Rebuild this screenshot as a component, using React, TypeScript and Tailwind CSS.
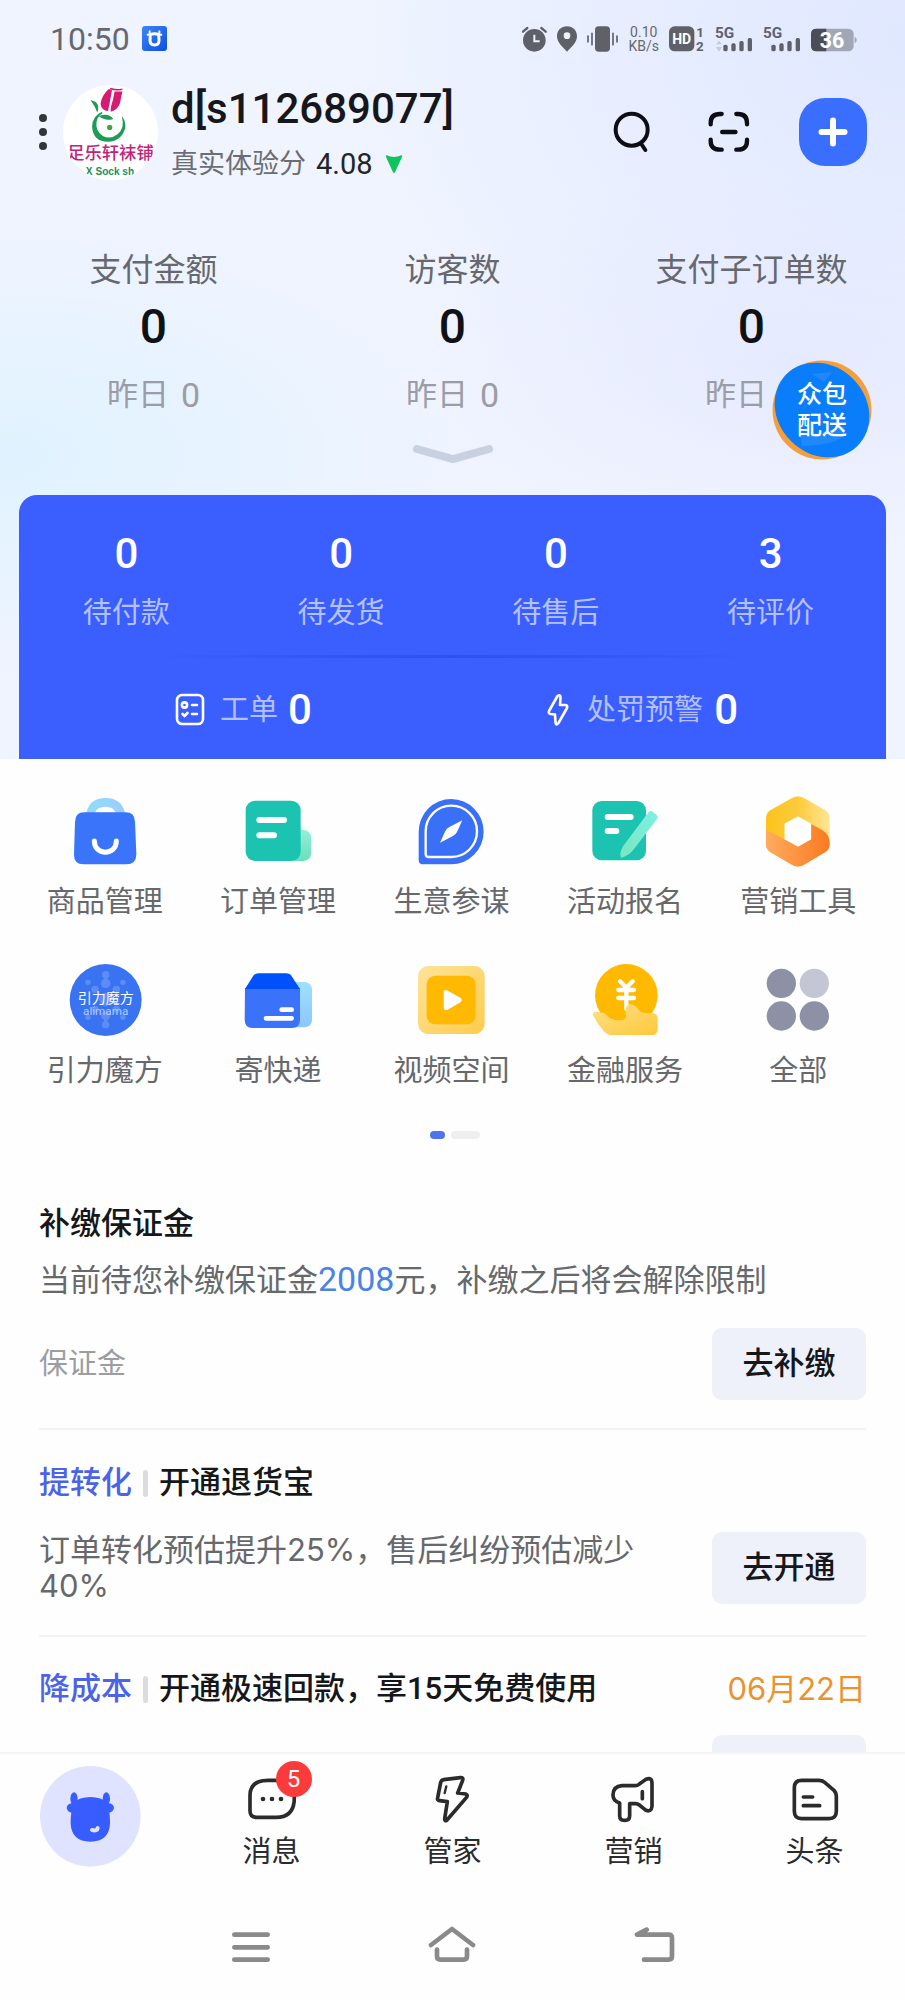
import type { ReactNode } from "react";

/* ---------- status bar ---------- */

function SignalBars() {
  return (
    <g fill="#5f6168">
      <text x="0" y="35" fontSize="46">5G</text>
      <rect x="25" y="56" width="13" height="20" rx="5" />
      <rect x="49" y="52" width="13" height="24" rx="5" />
      <rect x="73" y="45" width="13" height="31" rx="5" />
      <rect x="98" y="36" width="13" height="40" rx="5" />
    </g>
  );
}

function StatusBar() {
  return (
    <div className="flex h-[77px] items-center justify-between pr-[48px] pl-[50px] text-[#66686e]">
      <div className="flex items-center gap-[12px]">
        <span className="text-[32px] leading-[40px]">10:50</span>
        <svg width="25" height="25" viewBox="0 0 75 75" aria-hidden="true">
          <defs>
            <linearGradient id="app" x1="0" y1="0" x2="1" y2="1">
              <stop offset="0" stopColor="#3f86f5" />
              <stop offset="1" stopColor="#0a4fe6" />
            </linearGradient>
          </defs>
          <rect width="75" height="75" rx="9" fill="url(#app)" />
          <path d="M23 16v10M52 16v10M17 26h7M51 26h7" stroke="#fff" strokeWidth="6" strokeLinecap="round" />
          <path d="M25 26 Q38 20 50 26 L51 43 Q51 57 38 57 Q24 57 24 43 Z" fill="none" stroke="#fff" strokeWidth="9" />
        </svg>
      </div>
      <div className="flex items-center gap-[10px]">
        <svg width="25" height="26" viewBox="0 0 75 78" aria-hidden="true">
          <circle cx="37" cy="43" r="34" fill="#5f6168" />
          <path d="M3 17 L16 6 M71 17 L58 6" stroke="#5f6168" strokeWidth="7" strokeLinecap="round" />
          <path d="M37 26 V46 H53" fill="none" stroke="#eef2ff" strokeWidth="6" />
        </svg>
        <svg width="20" height="26" viewBox="0 0 60 78" aria-hidden="true">
          <path d="M30 1 C12 1 0 14 0 31 C0 50 18 64 30 77 C42 64 60 50 60 31 C60 14 48 1 30 1 Z" fill="#5f6168" />
          <circle cx="30" cy="29" r="10" fill="#eef2ff" />
        </svg>
        <svg width="31" height="26" viewBox="0 0 93 78" aria-hidden="true">
          <rect x="24" y="1" width="45" height="76" rx="11" fill="#5f6168" />
          <path d="M3 30v18M15 22v34M78 22v34M90 30v18" stroke="#5f6168" strokeWidth="5" strokeLinecap="round" />
        </svg>
        <div className="flex flex-col items-center text-[14px] leading-[14px]">
          <span>0.10</span>
          <span>KB/s</span>
        </div>
        <svg width="36" height="26" viewBox="0 0 108 78" className="overflow-visible font-bold" aria-label="HD 1 2">
          <rect x="0" y="1" width="76" height="75" rx="17" fill="#5f6168" />
          <text x="38" y="54" fontSize="42" textAnchor="middle" fill="#fff">HD</text>
          <text x="82" y="34" fontSize="40" fill="#5f6168">1</text>
          <text x="81" y="75" fontSize="40" fill="#5f6168">2</text>
        </svg>
        <svg width="38" height="26" viewBox="0 0 114 78" className="overflow-visible font-bold" aria-label="5G">
          <path d="M12 44 L21 55 H3 Z M12 77 L21 63 H3 Z" fill="#c3cadb" />
          <SignalBars />
        </svg>
        <svg width="38" height="26" viewBox="0 0 114 78" className="overflow-visible font-bold" aria-label="5G">
          <SignalBars />
        </svg>
        <svg width="46" height="26" viewBox="0 0 138 78" className="overflow-visible font-bold" aria-label="36">
          <rect x="0" y="8" width="128" height="68" rx="16" fill="#a2a7b6" />
          <path d="M16 8 H46 V76 H16 Q0 76 0 60 V24 Q0 8 16 8 Z" fill="#4c4e55" />
          <path d="M131 32 Q137 34 137 42 Q137 50 131 52 Z" fill="#a2a7b6" />
          <text x="63" y="65" fontSize="64" textAnchor="middle" fill="#fff">36</text>
        </svg>
      </div>
    </div>
  );
}

/* ---------- shop header ---------- */

function ShopLogo() {
  return (
    <svg width="95" height="95" viewBox="0 0 291 291" className="rounded-full bg-white" role="img" aria-label="足乐轩袜铺">
      <path d="M140 12 Q118 32 115 58 Q118 78 138 80 Q144 50 150 16 Z" fill="#d81b72" />
      <path d="M158 20 L182 20 Q178 36 175 54 Q168 76 146 82 Q145 68 153 46 Z" fill="#d81b72" />
      <path d="M144 11 Q160 17 182 13" stroke="#d81b72" strokeWidth="5" fill="none" />
      <path d="M84 46 Q106 50 108 66 Q109 76 105 84 Q98 64 84 46 Z" fill="#1e9b57" />
      <path d="M120 82 Q90 94 89 128 Q92 174 138 174 Q180 172 191 130 Q192 108 180 96 Q190 132 168 150 Q146 168 122 156 Q98 140 103 112 Q107 94 120 88 Z" fill="#1e9b57" />
      <path d="M110 96 Q138 84 154 104 Q130 112 110 96 Z" fill="#1e9b57" />
      <circle cx="143" cy="130" r="8" fill="#3fa535" />
      <text x="13" y="228" fontSize="53" fontWeight="500" fill="#c2237a">足乐轩袜铺</text>
      <text x="70" y="277" fontSize="31" fontWeight="700" fill="#1e8f5c" className="font-['Liberation_Sans']">X Sock sh</text>
    </svg>
  );
}

function ShopHeader() {
  return (
    <div className="flex h-[110px] items-center justify-between pr-[38px] pl-[38px]">
      <div className="flex items-center">
        <button type="button" aria-label="更多" className="mr-[15px]">
          <svg width="10" height="38" viewBox="0 0 10 38">
            <circle cx="5" cy="5" r="4" fill="#33353c" />
            <circle cx="5" cy="19" r="4" fill="#33353c" />
            <circle cx="5" cy="33" r="4" fill="#33353c" />
          </svg>
        </button>
        <ShopLogo />
        <div className="ml-[13px]">
          <h1 className="text-[42px] leading-[56px] font-medium text-[#15171c]">d[s112689077]</h1>
          <p className="mt-2 flex items-center text-[27px] leading-[38px] text-[#6b6d73]">
            真实体验分
            <span className="ml-[10px] text-[29px] text-[#23252b]">4.08</span>
            <svg width="18" height="20" viewBox="0 0 54 60" className="ml-[12px]" aria-hidden="true">
              <path d="M5 4 Q27 14 49 4 Q53 3 51 9 L30 55 Q27 60 24 55 L3 9 Q1 3 5 4 Z" fill="#10c45c" />
            </svg>
          </p>
        </div>
      </div>
      <div className="flex items-center">
        <button type="button" aria-label="搜索" className="mr-[57px]">
          <svg width="38" height="42" viewBox="0 0 114 126" fill="none" stroke="#0c0e12" strokeWidth="12" strokeLinecap="round">
            <circle cx="56" cy="56" r="48" />
            <path d="M85 99 L97 117" />
          </svg>
        </button>
        <button type="button" aria-label="扫一扫" className="mr-[49px]">
          <svg width="42" height="42" viewBox="0 0 126 126" fill="none" stroke="#0c0e12" strokeWidth="13" strokeLinecap="round">
            <path d="M8 40 V36 Q8 9 36 9 H41 M85 9 H90 Q117 9 117 36 V40 M117 86 V90 Q117 116 90 116 H85 M41 116 H36 Q8 116 8 90 V86" />
            <path d="M43 63 H82" strokeWidth="14" />
          </svg>
        </button>
        <button type="button" aria-label="新建" className="flex size-[68px] items-center justify-center rounded-[26px] bg-[#3a6eff]">
          <svg width="30" height="30" viewBox="0 0 30 30" stroke="#fff" strokeWidth="6" strokeLinecap="round">
            <path d="M15 3.500V26.500M3.500 15H26.500" />
          </svg>
        </button>
      </div>
    </div>
  );
}

/* ---------- statistics ---------- */

const stats = ["支付金额", "访客数", "支付子订单数"];

function Stats() {
  return (
    <section className="relative px-1 pt-[63px]">
      <div className="grid grid-cols-3 text-center">
        {stats.map((label) => (
          <div key={label}>
            <p className="text-[32px] leading-[40px] text-[#66686e]">{label}</p>
            <p className="mt-[9px] text-[48px] leading-[56px] font-medium text-[#0f1115]">0</p>
            <p className="mt-[20px] flex items-center justify-center gap-3 text-[31px] leading-[40px] text-[#9a9da5]">
              昨日<span className="text-[34px]">0</span>
            </p>
          </div>
        ))}
      </div>
      <button type="button" aria-label="展开" className="mx-auto mt-[29px] block">
        <svg width="82" height="22" viewBox="0 0 82 22" fill="none" stroke="#c9d1e0" strokeWidth="8" strokeLinecap="round">
          <path d="M5 5 L41 15 L77 5" />
        </svg>
      </button>
      <a href="#delivery" className="absolute right-[33px] bottom-[6px] flex size-[100px] items-center justify-center">
        <svg width="100" height="100" viewBox="0 0 100 100" className="absolute inset-0" aria-hidden="true">
          <circle cx="50" cy="50" r="49.500" fill="#f3a03c" />
          <ellipse cx="50" cy="50" rx="50.500" ry="44" transform="rotate(45 50 50)" fill="#0a7dfb" />
          <path d="M28 74 Q50 76 72 66 Q80 84 30 86 Z" fill="#2f8ffb" opacity=".6" />
          <path d="M40 14 L60 12 L52 22 Z" fill="#2f8ffb" opacity=".6" />
        </svg>
        <span className="relative w-[50px] text-[25px] leading-[31px] font-medium text-white">众包配送</span>
      </a>
    </section>
  );
}

/* ---------- to-do card ---------- */

const todos = [
  { label: "待付款", count: 0 },
  { label: "待发货", count: 0 },
  { label: "待售后", count: 0 },
  { label: "待评价", count: 3 },
];

function TodoCard() {
  return (
    <section className="mx-[19px] mt-[29px] rounded-t-[18px] bg-[#3b5eff] pt-[31px] pb-[25px] text-white">
      <div className="grid grid-cols-4 pr-[8px] text-center">
        {todos.map((t) => (
          <div key={t.label}>
            <p className="text-[42px] leading-[56px] font-medium">{t.count}</p>
            <p className="mt-[11px] text-[29px] leading-[40px] text-[#b3c1ff]">{t.label}</p>
          </div>
        ))}
      </div>
      <div className="mx-[130px] mt-[22px] h-[3px] bg-linear-to-r from-[#3b5eff] via-[#2f4fee] to-[#3b5eff]" />
      <div className="mt-[28px] flex items-center justify-between pr-[148px] pl-[156px] leading-[48px]">
        <div className="flex items-center">
          <svg width="30" height="34" viewBox="0 0 30 34" fill="none" stroke="#fff" strokeWidth="2.600" strokeLinecap="round" aria-hidden="true">
            <rect x="2" y="2" width="26" height="29" rx="5" />
            <circle cx="9.500" cy="12" r="2.600" />
            <path d="M17 12h5M17 21h5M7.500 21l2 2L12.500 20" />
          </svg>
          <span className="ml-[15px] text-[29px] text-[#b3c1ff]">工单</span>
          <span className="ml-[10px] text-[42px] font-medium">0</span>
        </div>
        <div className="flex items-center">
          <svg width="22" height="34" viewBox="0 0 22 34" fill="none" stroke="#fff" strokeWidth="2.600" strokeLinejoin="round" aria-hidden="true">
            <path d="M10.500 3 Q13.500 1 13.500 4.500 L13 12 H18 Q21 12 20 15 L11.500 30 Q9 33 8.500 29.500 L8 21.500 L3.500 21 Q1 20.500 2 18 Z" />
          </svg>
          <span className="ml-[18px] text-[29px] text-[#b3c1ff]">处罚预警</span>
          <span className="ml-[11px] text-[42px] font-medium">0</span>
        </div>
      </div>
    </section>
  );
}

/* ---------- shortcuts ---------- */

const shortcuts: { label: string; art: ReactNode }[] = [
  {
    label: "商品管理",
    art: (
      <>
        <defs>
          <linearGradient id="bag" x1="0" y1="0" x2="1" y2="0">
            <stop offset="0" stopColor="#8fdcf8" />
            <stop offset="1" stopColor="#9ccdff" />
          </linearGradient>
        </defs>
        <path d="M57 72 Q60 15 116 15 Q170 15 176 72 Z" fill="url(#bag)" />
        <path d="M84 60 Q90 41 116 41 Q140 41 146 60 Z" fill="#fff" />
        <path d="M52 58 H176 Q203 58 204 86 L208 184 Q208 214 178 214 H50 Q20 214 21 184 L24 86 Q25 58 52 58 Z" fill="#3a74fb" />
        <path d="M82 144 C82 189 148 189 148 144" fill="none" stroke="#fff" strokeWidth="15" strokeLinecap="round" />
      </>
    ),
  },
  {
    label: "订单管理",
    art: (
      <>
        <defs>
          <linearGradient id="order" x1="0" y1="0" x2="0" y2="1">
            <stop offset="0" stopColor="#93eedd" />
            <stop offset="1" stopColor="#68e0b8" />
          </linearGradient>
        </defs>
        <rect x="140" y="111" width="73" height="93" rx="22" fill="url(#order)" />
        <rect x="17" y="23" width="165" height="181" rx="28" fill="#1bc3b0" />
        <path d="M58 81 H132 M58 127 H102" stroke="#fff" strokeWidth="18" strokeLinecap="round" />
      </>
    ),
  },
  {
    label: "生意参谋",
    art: (
      <>
        <path d="M17 116 A97.500 98 0 1 1 114 214 H31 Q17 214 17 200 Z" fill="#3a70f8" />
        <path d="M38 115 A77 77 0 1 1 115 192 H48 Q38 192 38 182 Z" fill="none" stroke="#fff" strokeWidth="7" />
        <path d="M81 149 L97 114 Q101 107 109 102 L148 82 L132 117 Q128 125 120 129 Z" fill="#fff" />
      </>
    ),
  },
  {
    label: "活动报名",
    art: (
      <>
        <defs>
          <linearGradient id="pen" x1="1" y1="0" x2="0" y2="1">
            <stop offset="0" stopColor="#7ff0e6" />
            <stop offset="1" stopColor="#78e6bf" />
          </linearGradient>
        </defs>
        <rect x="16" y="24" width="161" height="178" rx="28" fill="#1cc3b0" />
        <path d="M62 72 H131 M62 114 H88" stroke="#fff" strokeWidth="18" strokeLinecap="round" />
        <path d="M185 57 Q191 51 198 57 L209 66 Q215 71 211 77 L138 172 Q126 187 102 195 Q96 181 108 160 Z" fill="url(#pen)" />
      </>
    ),
  },
  {
    label: "营销工具",
    art: (
      <>
        <defs>
          <linearGradient id="hexTop" x1="0" y1="0.500" x2="1" y2="0.500">
            <stop offset="0" stopColor="#fcc41a" />
            <stop offset="0.500" stopColor="#fccb3c" />
            <stop offset="1" stopColor="#ffe596" />
          </linearGradient>
          <linearGradient id="hexLow" x1="0" y1="0" x2="1" y2="0">
            <stop offset="0" stopColor="#ffab5e" />
            <stop offset="1" stopColor="#f97a20" />
          </linearGradient>
        </defs>
        <path d="M92 17 Q114 2 136 17 L195 51 Q209 59 209 77 V154 Q209 170 195 178 L136 213 Q114 228 92 213 L32 178 Q18 170 18 154 V77 Q18 59 32 51 Z" fill="url(#hexTop)" />
        <path d="M18 111 L114 160 L153 138 V93 L188 112 Q209 126 209 150 V154 Q209 170 195 178 L136 213 Q114 228 92 213 L32 178 Q18 170 18 154 Z" fill="url(#hexLow)" />
        <path d="M114 73 L151 94 V137 L114 158 L76 137 V94 Z" fill="#fff" stroke="#fff" strokeWidth="5" strokeLinejoin="round" />
      </>
    ),
  },
  {
    label: "引力魔方",
    art: (
      <>
        <circle cx="116" cy="114" r="108" fill="#3a73f2" />
        <g fill="#7fa6fb" opacity=".5">
          <circle cx="116" cy="38" r="11" />
          <circle cx="116" cy="64" r="14" />
          <circle cx="63" cy="61" r="8" />
          <circle cx="168" cy="61" r="8" />
          <circle cx="84" cy="82" r="11" />
          <circle cx="148" cy="82" r="11" />
          <circle cx="116" cy="112" r="20" />
          <circle cx="84" cy="142" r="11" />
          <circle cx="148" cy="142" r="11" />
          <circle cx="116" cy="160" r="14" />
          <circle cx="63" cy="166" r="8" />
          <circle cx="168" cy="166" r="8" />
          <circle cx="116" cy="188" r="11" />
          <path d="M111 38h10v26h-10zM111 160h10v28h-10z" />
        </g>
        <text x="116" y="122" fontSize="42" textAnchor="middle" fill="#fff">引力魔方</text>
        <text x="116" y="159" fontSize="35" textAnchor="middle" fill="#b5cbff">alimama</text>
      </>
    ),
  },
  {
    label: "寄快递",
    art: (
      <>
        <defs>
          <linearGradient id="box" x1="0" y1="0" x2="0" y2="1">
            <stop offset="0" stopColor="#a0e0fb" />
            <stop offset="1" stopColor="#8cc6ff" />
          </linearGradient>
        </defs>
        <rect x="130" y="60" width="86" height="136" rx="22" fill="url(#box)" />
        <path d="M15 78 H180 V173 Q180 198 156 198 H38 Q14 198 14 173 Z" fill="#3a73fa" />
        <path d="M15 81 L38 44 Q43 34 56 34 H138 Q150 34 156 44 L180 81 Z" fill="#0050fb" />
        <path d="M125 143 H155 M78 169 H155" stroke="#fff" strokeWidth="14" strokeLinecap="round" />
      </>
    ),
  },
  {
    label: "视频空间",
    art: (
      <>
        <defs>
          <linearGradient id="video" x1="0" y1="0" x2="1" y2="1">
            <stop offset="0" stopColor="#fde49a" />
            <stop offset="1" stopColor="#ffcb4d" />
          </linearGradient>
        </defs>
        <rect x="15" y="12" width="200" height="204" rx="32" fill="url(#video)" />
        <rect x="41" y="41" width="147" height="146" rx="26" fill="#ffb900" />
        <path d="M92 94 Q92 80 104 86 L142 107 Q150 114 142 121 L104 143 Q92 148 92 135 Z" fill="#fff" />
      </>
    ),
  },
  {
    label: "金融服务",
    art: (
      <>
        <defs>
          <linearGradient id="hand" x1="0" y1="0" x2="1" y2="1">
            <stop offset="0" stopColor="#fde08a" />
            <stop offset="1" stopColor="#ffc838" />
          </linearGradient>
        </defs>
        <circle cx="118" cy="100" r="94" fill="#ffb900" />
        <path d="M99 58 L118 77 L137 58 M94 84 H141 M94 108 H141 M118 78 V140" fill="none" stroke="#fff" strokeWidth="13" strokeLinecap="round" />
        <path d="M17 158 Q18 147 33 150 L53 154 Q72 176 95 175 L108 174 Q117 172 116 160 L116 138 Q124 120 140 130 Q150 134 158 147 Q165 154 185 153 Q212 151 212 168 L212 201 Q211 219 195 219 L77 219 Q62 219 52 209 L35 188 Z" fill="url(#hand)" />
      </>
    ),
  },
  {
    label: "全部",
    art: (
      <>
        <circle cx="64" cy="64" r="44" fill="#8e90a5" />
        <circle cx="163" cy="64" r="44" fill="#c4c6d5" />
        <circle cx="64" cy="162" r="44" fill="#8e90a5" />
        <circle cx="163" cy="162" r="44" fill="#8e90a5" />
      </>
    ),
  },
];

function Shortcuts() {
  return (
    <section className="pt-[34px]">
      <div className="grid grid-cols-5 gap-y-[40px] pr-[20px] pl-[18px]">
        {shortcuts.map((s) => (
          <a key={s.label} href="#shortcut" className="flex flex-col items-center">
            <svg width="76" height="76" viewBox="0 0 228 228" aria-hidden="true">
              {s.art}
            </svg>
            <span className="mt-[13px] text-[29px] leading-[40px] text-[#66686c]">{s.label}</span>
          </a>
        ))}
      </div>
      <div className="mt-[40px] flex justify-center gap-[6px] pl-[5px]">
        <span className="h-2 w-[15px] rounded-full bg-[#4f73ee]" />
        <span className="h-2 w-[29px] rounded-full bg-[#efeff1]" />
      </div>
    </section>
  );
}

/* ---------- notices ---------- */

function ActionButton({ label, children }: { label?: string; children?: ReactNode }) {
  return (
    <button type="button" aria-label={label} className="h-[72px] w-[154px] shrink-0 rounded-[10px] bg-[#eef0fa] text-[31px] leading-[40px] font-medium text-[#15171a]">
      {children}
    </button>
  );
}

function TaggedTitle({ tag, children }: { tag: string; children: ReactNode }) {
  return (
    <h2 className="flex items-center text-[31px] leading-[44px] font-medium text-[#15171a]">
      <span className="text-[#4a63e8]">{tag}</span>
      <span className="mr-[11px] ml-[11px] h-[27px] w-[5px] rounded-full bg-[#dcdce0]" />
      {children}
    </h2>
  );
}

function Notices() {
  return (
    <section className="px-[39px] pt-[63px]">
      <article className="border-b-2 border-[#f3f3f5] pb-[28px]">
        <h2 className="text-[31px] leading-[44px] font-medium text-[#15171a]">补缴保证金</h2>
        <p className="mt-[13px] text-[31px] leading-[40px] text-[#66686c]">
          当前待您补缴保证金<span className="text-[34px] text-[#4a82e6]">2008</span>元，补缴之后将会解除限制
        </p>
        <div className="mt-[27px] flex items-center justify-between">
          <span className="text-[29px] leading-[40px] text-[#9c9da1]">保证金</span>
          <ActionButton>去补缴</ActionButton>
        </div>
      </article>
      <article className="border-b-2 border-[#f3f3f5] pt-[31px] pb-[31px]">
        <TaggedTitle tag="提转化">开通退货宝</TaggedTitle>
        <div className="mt-[27px] flex items-center justify-between gap-[60px]">
          <p className="font-[Inter,'Noto_Sans_CJK_SC',sans-serif] text-[31px] leading-[36px] text-[#66686c]">
            订单转化预估提升25%，售后纠纷预估减少40%
          </p>
          <ActionButton>去开通</ActionButton>
        </div>
      </article>
      <article className="pt-[30px]">
        <div className="flex items-center justify-between">
          <TaggedTitle tag="降成本">开通极速回款，享15天免费使用</TaggedTitle>
          <time className="font-[Inter,'Noto_Sans_CJK_SC',sans-serif] text-[31px] leading-[44px] text-[#e8932f]">06月22日</time>
        </div>
        <div className="mt-[24px] flex justify-end">
          <ActionButton label="去开通" />
        </div>
      </article>
    </section>
  );
}

/* ---------- bottom bars ---------- */

const tabs: { label: string; badge?: number; art: ReactNode }[] = [
  {
    label: "消息",
    badge: 5,
    art: (
      <>
        <path d="M6 62 Q6 16 60 16 H82 Q139 16 139 68 Q139 127 84 127 H26 Q6 127 6 107 Z" />
        <g fill="#2b2b2d" stroke="none">
          <circle cx="45" cy="72" r="7" />
          <circle cx="72" cy="72" r="7" />
          <circle cx="99" cy="72" r="7" />
        </g>
      </>
    ),
  },
  {
    label: "管家",
    art: (
      <>
        <path d="M44 14 L94 8 Q104 7 101 16 L86 54 L110 57 Q118 60 112 68 L54 135 Q47 141 47 131 L55 80 L32 77 Q24 76 26 68 L35 22 Q37 15 44 14 Z" />
        <path d="M52 34 L47 54" strokeWidth="7" />
      </>
    ),
  },
  {
    label: "营销",
    art: (
      <>
        <path d="M36 32 H76 Q82 32 87 28 L108 13 Q126 6 126 24 V94 Q124 112 108 106 L88 90 Q83 86 77 86 H59 V122 Q59 136 44 136 Q29 136 29 122 V84 Q9 78 9 60 Q9 34 36 32 Z" />
        <path d="M97 50 V71" />
      </>
    ),
  },
  {
    label: "头条",
    art: (
      <>
        <path d="M32 16 H84 Q94 16 101 22 L129 46 Q136 53 136 62 V109 Q136 131 114 131 H32 Q10 131 10 109 V38 Q10 16 32 16 Z" />
        <path d="M37 66 H65 M37 92 H86" />
      </>
    ),
  },
];

function TabBar() {
  return (
    <nav className="grid h-[128px] grid-cols-5 border-t-2 border-[#f4f4f6] pt-[12px]">
      <a href="#home" aria-label="首页" className="flex items-start justify-center">
        <svg width="101" height="101" viewBox="0 0 303 303">
          <circle cx="151" cy="151" r="151" fill="#dfe3ff" />
          <g fill="#375cff">
            <ellipse cx="102" cy="98" rx="11" ry="19" />
            <ellipse cx="199" cy="98" rx="11" ry="19" />
            <ellipse cx="96" cy="126" rx="16" ry="14" transform="rotate(14 96 126)" />
            <ellipse cx="206" cy="126" rx="16" ry="14" transform="rotate(-14 206 126)" />
            <path d="M98 112 Q118 93 151 93 Q184 93 204 112 L208 140 Q210 150 210 172 Q208 227 151 227 Q94 227 92 172 Q92 150 94 140 Z" />
          </g>
          <path d="M156 192 Q172 196 173 186" fill="none" stroke="#dfe3ff" strokeWidth="12" strokeLinecap="round" />
        </svg>
      </a>
      {tabs.map((t) => (
        <a key={t.label} href="#tab" className="flex flex-col items-center pt-[9px]">
          <span className="relative">
            <svg width="48" height="48" viewBox="0 0 144 144" fill="none" stroke="#2b2b2d" strokeWidth="11" strokeLinecap="round" strokeLinejoin="round" aria-hidden="true">
              {t.art}
            </svg>
            {t.badge !== undefined && (
              <span className="absolute -top-[14px] -right-[16px] flex size-[36px] items-center justify-center rounded-full bg-[#fb3b3b] text-[24px] leading-none text-white">
                {t.badge}
              </span>
            )}
          </span>
          <span className="mt-[10px] text-[29px] leading-[38px] text-[#2b2b2d]">{t.label}</span>
        </a>
      ))}
    </nav>
  );
}

function SystemNav() {
  return (
    <div className="grid h-[120px] grid-cols-3 justify-items-center px-[150px] pt-[46px]">
      <button type="button" aria-label="最近任务" className="self-start">
        <svg width="38" height="36" viewBox="0 0 114 108" stroke="#8a8a8a" strokeWidth="14" strokeLinecap="round">
          <path d="M7 26H107M7 64H107M7 101H107" />
        </svg>
      </button>
      <button type="button" aria-label="主屏幕" className="self-start">
        <svg width="48" height="36" viewBox="0 0 144 108" fill="none" stroke="#8a8a8a" strokeWidth="14" strokeLinecap="round" strokeLinejoin="round">
          <path d="M9 57 L72 9 L135 57" />
          <path d="M27 71 V91 Q27 101 37 101 H107 Q117 101 117 91 V71" />
        </svg>
      </button>
      <button type="button" aria-label="返回" className="self-start">
        <svg width="41" height="36" viewBox="0 0 123 108" fill="none" stroke="#8a8a8a" strokeWidth="14" strokeLinecap="round" strokeLinejoin="round">
          <path d="M38 11 L9 26 H104 Q114 26 114 36 V91 Q114 101 104 101 H30" />
        </svg>
      </button>
    </div>
  );
}

export default function App() {
  return (
    <div className="flex h-screen flex-col overflow-hidden bg-[#fefefe] font-[Roboto,'Noto_Sans_CJK_SC',sans-serif]">
      <main className="min-h-0 flex-1 overflow-hidden">
        <header className="bg-[radial-gradient(ellipse_at_0%_60%,#e0f2ff_0%,#e0f2ff00_38%),radial-gradient(ellipse_at_100%_5%,#e0e8ff_0%,#e0e8ff00_45%),radial-gradient(ellipse_at_88%_48%,#e8ebfe_0%,#e8ebfe00_35%)] bg-[#f0f4ff]">
          <StatusBar />
          <ShopHeader />
          <Stats />
          <TodoCard />
        </header>
        <Shortcuts />
        <Notices />
      </main>
      <footer className="shrink-0">
        <TabBar />
        <SystemNav />
      </footer>
    </div>
  );
}
